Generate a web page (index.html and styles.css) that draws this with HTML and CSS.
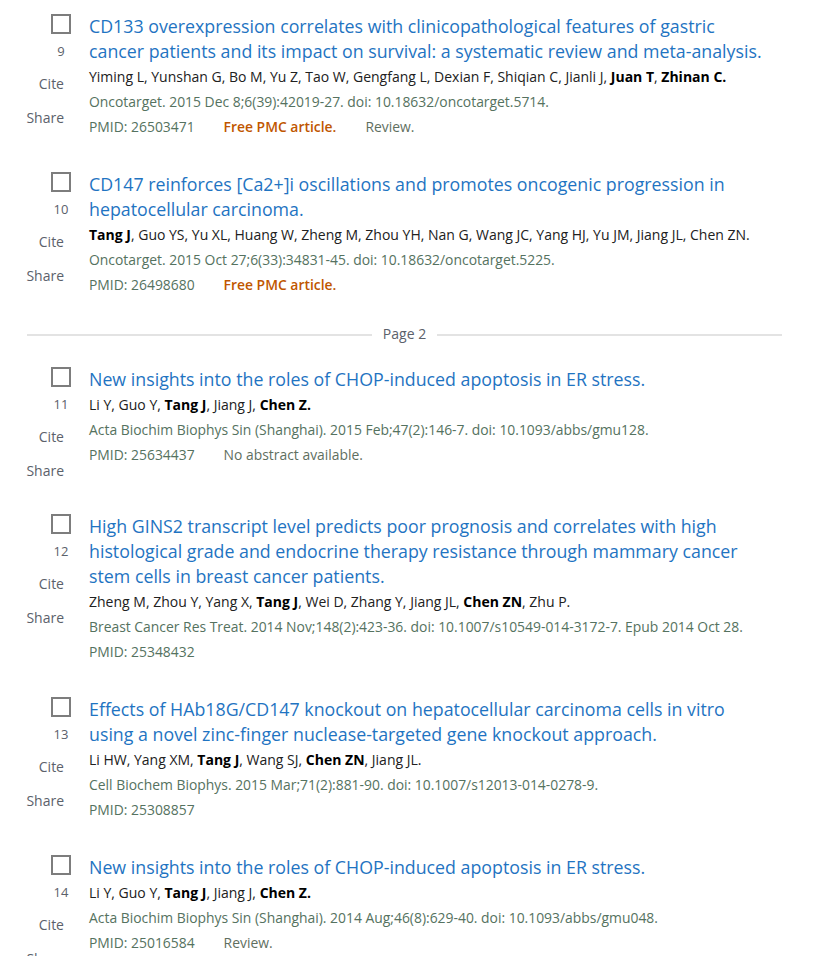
FILE: index.html
```html
<!DOCTYPE html>
<html lang="en">
<head>
<meta charset="utf-8">
<title>Search results</title>
<link rel="stylesheet" href="styles.css">
</head>
<body>
<main class="results">

  <article class="docsum">
    <div class="docsum-side">
      <div class="select">
        <span class="checkbox"></span>
        <span class="position">9</span>
      </div>
      <span class="action cite">Cite</span>
      <span class="action share">Share</span>
    </div>
    <div class="docsum-content">
      <a class="title" href="#">CD133 overexpression correlates with clinicopathological features of gastric cancer patients and its impact on survival: a systematic review and meta-analysis.</a>
      <div class="authors">Yiming L, Yunshan G, Bo M, Yu Z, Tao W, Gengfang L, Dexian F, Shiqian C, Jianli J, <b>Juan T</b>, <b>Zhinan C.</b></div>
      <div class="citation">Oncotarget. 2015 Dec 8;6(39):42019-27. doi: 10.18632/oncotarget.5714.</div>
      <div class="meta"><span class="pmid">PMID: 26503471</span><span class="free">Free PMC article.</span><span class="note">Review.</span></div>
    </div>
  </article>

  <article class="docsum">
    <div class="docsum-side">
      <div class="select">
        <span class="checkbox"></span>
        <span class="position">10</span>
      </div>
      <span class="action cite">Cite</span>
      <span class="action share">Share</span>
    </div>
    <div class="docsum-content">
      <a class="title" href="#">CD147 reinforces [Ca2+]i oscillations and promotes oncogenic progression in hepatocellular carcinoma.</a>
      <div class="authors"><b>Tang J</b>, Guo YS, Yu XL, Huang W, Zheng M, Zhou YH, Nan G, Wang JC, Yang HJ, Yu JM, Jiang JL, Chen ZN.</div>
      <div class="citation">Oncotarget. 2015 Oct 27;6(33):34831-45. doi: 10.18632/oncotarget.5225.</div>
      <div class="meta"><span class="pmid">PMID: 26498680</span><span class="free">Free PMC article.</span></div>
    </div>
  </article>

  <div class="page-divider"><span>Page 2</span></div>

  <article class="docsum">
    <div class="docsum-side">
      <div class="select">
        <span class="checkbox"></span>
        <span class="position">11</span>
      </div>
      <span class="action cite">Cite</span>
      <span class="action share">Share</span>
    </div>
    <div class="docsum-content">
      <a class="title" href="#">New insights into the roles of CHOP-induced apoptosis in ER stress.</a>
      <div class="authors">Li Y, Guo Y, <b>Tang J</b>, Jiang J, <b>Chen Z.</b></div>
      <div class="citation">Acta Biochim Biophys Sin (Shanghai). 2015 Feb;47(2):146-7. doi: 10.1093/abbs/gmu128.</div>
      <div class="meta"><span class="pmid">PMID: 25634437</span><span class="note">No abstract available.</span></div>
    </div>
  </article>

  <article class="docsum">
    <div class="docsum-side">
      <div class="select">
        <span class="checkbox"></span>
        <span class="position">12</span>
      </div>
      <span class="action cite">Cite</span>
      <span class="action share">Share</span>
    </div>
    <div class="docsum-content">
      <a class="title" href="#">High GINS2 transcript level predicts poor prognosis and correlates with high histological grade and endocrine therapy resistance through mammary cancer stem cells in breast cancer patients.</a>
      <div class="authors">Zheng M, Zhou Y, Yang X, <b>Tang J</b>, Wei D, Zhang Y, Jiang JL, <b>Chen ZN</b>, Zhu P.</div>
      <div class="citation">Breast Cancer Res Treat. 2014 Nov;148(2):423-36. doi: 10.1007/s10549-014-3172-7. Epub 2014 Oct 28.</div>
      <div class="meta"><span class="pmid">PMID: 25348432</span></div>
    </div>
  </article>

  <article class="docsum">
    <div class="docsum-side">
      <div class="select">
        <span class="checkbox"></span>
        <span class="position">13</span>
      </div>
      <span class="action cite">Cite</span>
      <span class="action share">Share</span>
    </div>
    <div class="docsum-content">
      <a class="title" href="#">Effects of HAb18G/CD147 knockout on hepatocellular carcinoma cells in vitro using a novel zinc-finger nuclease-targeted gene knockout approach.</a>
      <div class="authors">Li HW, Yang XM, <b>Tang J</b>, Wang SJ, <b>Chen ZN</b>, Jiang JL.</div>
      <div class="citation">Cell Biochem Biophys. 2015 Mar;71(2):881-90. doi: 10.1007/s12013-014-0278-9.</div>
      <div class="meta"><span class="pmid">PMID: 25308857</span></div>
    </div>
  </article>

  <article class="docsum">
    <div class="docsum-side">
      <div class="select">
        <span class="checkbox"></span>
        <span class="position">14</span>
      </div>
      <span class="action cite">Cite</span>
      <span class="action share">Share</span>
    </div>
    <div class="docsum-content">
      <a class="title" href="#">New insights into the roles of CHOP-induced apoptosis in ER stress.</a>
      <div class="authors">Li Y, Guo Y, <b>Tang J</b>, Jiang J, <b>Chen Z.</b></div>
      <div class="citation">Acta Biochim Biophys Sin (Shanghai). 2014 Aug;46(8):629-40. doi: 10.1093/abbs/gmu048.</div>
      <div class="meta"><span class="pmid">PMID: 25016584</span><span class="note">Review.</span></div>
    </div>
  </article>

</main>
</body>
</html>
```

FILE: styles.css
```css
html, body {
  margin: 0;
  background: #ffffff;
}

body {
  font-family: "Open Sans", "Noto Sans", sans-serif;
  color: #212121;
  overflow: hidden;
}

.results {
  margin-left: 27px;
  width: 755px;
  padding-top: 14px;
  display: flex;
  flex-direction: column;
}

.docsum {
  display: flex;
  align-items: flex-start;
  margin-bottom: 33px;
}

.docsum-side {
  flex: none;
  width: 44px;
  margin-right: 18px;
  display: flex;
  flex-direction: column;
  align-items: flex-end;
  height: 114px;
}

.select {
  width: 20px;
  display: flex;
  flex-direction: column;
  align-items: center;
}

.checkbox {
  box-sizing: border-box;
  width: 20px;
  height: 20px;
  border: 2px solid #7d7d7d;
  background: #fff;
}

.position {
  margin-top: 7px;
  font-size: 13px;
  line-height: 20px;
  color: #5b616b;
  white-space: nowrap;
}

.action {
  font-size: 14px;
  color: #5b616b;
  margin-right: 7px;
}

.cite {
  margin-top: 11px;
  line-height: 24px;
}

.share {
  margin-top: 12px;
  line-height: 20px;
}

.docsum-content {
  width: 682px;
}

.title {
  display: block;
  font-size: 17.8px;
  line-height: 25px;
  color: #1f74c2;
  text-decoration: none;
  hyphens: manual;
}

.authors {
  font-size: 14px;
  line-height: 25px;
  color: #212121;
}

.authors b {
  font-weight: 700;
  color: #000;
}

.citation {
  font-size: 13.9px;
  line-height: 25px;
  color: #557260;
}

.meta {
  display: flex;
  font-size: 13.9px;
  line-height: 25px;
  color: #557260;
}

.meta span + span {
  margin-left: 29px;
}

.free {
  color: #c05600;
  font-weight: 600;
}

.note {
  color: #5f6f5f;
}

.page-divider {
  display: flex;
  align-items: center;
  gap: 11px;
  height: 20px;
  margin: -5px 0 22px;
  font-size: 14px;
  color: #5b616b;
}

.page-divider span {
  padding-bottom: 3px;
}

.page-divider::before,
.page-divider::after {
  content: "";
  flex: 1;
  height: 2px;
  background: #e3e3e3;
}
```
